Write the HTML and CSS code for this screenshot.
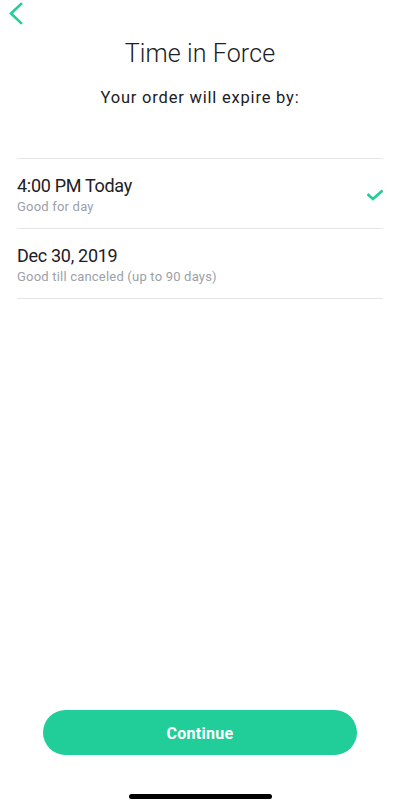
FILE: index.html
```html
<!DOCTYPE html>
<html lang="en">
<head>
<meta charset="utf-8">
<title>Time in Force</title>
<link rel="stylesheet" href="styles.css">
</head>
<body>
<div class="screen">
  <div class="nav">
    <svg class="back" width="16" height="24" viewBox="0 0 16 24" aria-label="Back">
      <path d="M12 3 L2 12.5 L12 22" fill="none" stroke="#21ce99" stroke-width="2.6" stroke-linecap="square" stroke-linejoin="miter"/>
    </svg>
  </div>
  <h1 class="title">Time in Force</h1>
  <p class="subtitle">Your order will expire by:</p>
  <ul class="options">
    <li class="option">
      <div class="option-text">
        <div class="option-title">4:00 PM Today</div>
        <div class="option-sub">Good for day</div>
      </div>
      <svg class="check" width="16" height="12" viewBox="0 0 16 12">
        <path d="M1.5 6 L6 10 L14.5 2.5" fill="none" stroke="#21ce99" stroke-width="2.8" stroke-linecap="square"/>
      </svg>
    </li>
    <li class="option">
      <div class="option-text">
        <div class="option-title">Dec 30, 2019</div>
        <div class="option-sub">Good till canceled (up to 90 days)</div>
      </div>
    </li>
  </ul>
  <div class="spacer"></div>
  <button class="continue">Continue</button>
  <div class="home-indicator"></div>
</div>
</body>
</html>
```
FILE: styles.css
```css
* { box-sizing: border-box; }
html, body { margin: 0; padding: 0; background: #fff; }
body { font-family: Roboto, "Noto Sans", sans-serif; color: #1c2024; }
.screen {
  width: 400px;
  height: 808px;
  display: flex;
  flex-direction: column;
}
.nav {
  height: 39px;
  padding: 1px 0 0 9px;
}
.back { display: block; }
.title {
  margin: 0;
  font-size: 25px;
  line-height: 30px;
  font-weight: 300;
  text-align: center;
  letter-spacing: 0.1px;
}
.subtitle {
  margin: 19px 0 0;
  font-size: 16.5px;
  line-height: 20px;
  font-weight: 400;
  text-align: center;
  letter-spacing: 0.8px;
}
.options {
  list-style: none;
  margin: 50px 17px 0;
  padding: 0;
  border-top: 1px solid #e3e5e8;
}
.option {
  display: flex;
  align-items: center;
  justify-content: space-between;
  padding: 16px 0 13px;
  border-bottom: 1px solid #e3e5e8;
}
.option-text { display: flex; flex-direction: column; gap: 2px; }
.option-title {
  font-size: 18px;
  line-height: 22px;
  font-weight: 400;
  letter-spacing: -0.3px;
}
.option-sub {
  font-size: 13px;
  line-height: 16px;
  color: #9ba1a8;
  letter-spacing: 0.2px;
}
.check { display: block; }
.spacer { flex: 1; }
.continue {
  margin: 0 43px;
  height: 45px;
  border: none;
  border-radius: 23px;
  background: #21ce99;
  color: #fff;
  font-family: Roboto, "Noto Sans", sans-serif;
  font-size: 16px;
  font-weight: 700;
  letter-spacing: 0.3px;
  padding: 1px 0 0;
}
.home-indicator {
  align-self: center;
  width: 143px;
  height: 5px;
  border-radius: 3px;
  background: #000;
  margin: 39px 0 9px;
}
```
